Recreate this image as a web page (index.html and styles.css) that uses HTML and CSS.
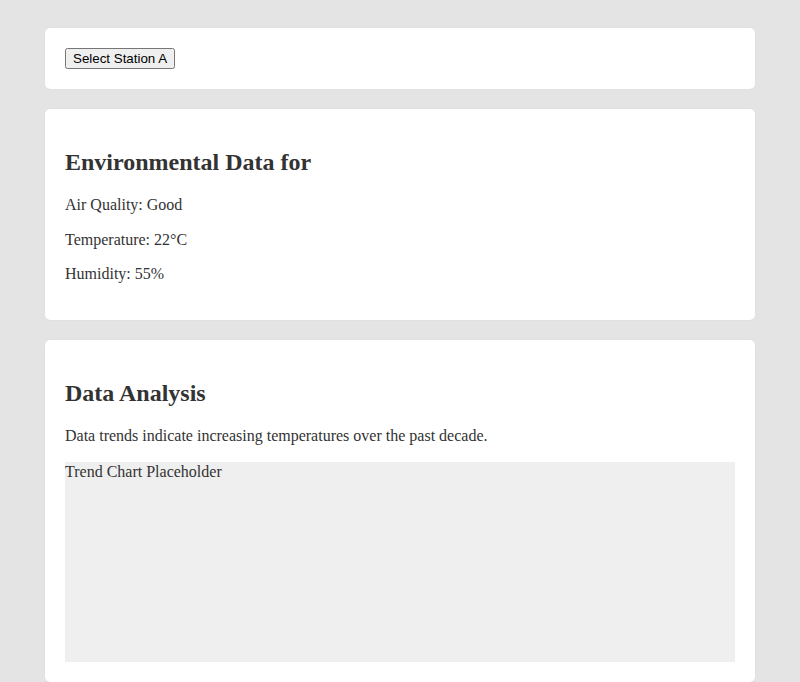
FILE: index.html
```html
<!DOCTYPE html>
<html lang="en">
<head>
<meta charset="utf-8">
<title>Environmental Data</title>
<link rel="stylesheet" href="styles.css">
</head>
<body>
<main class="page">
  <section class="card">
    <button class="station-btn">Select Station A</button>
  </section>
  <section class="card">
    <h2 class="card-title">Environmental Data for</h2>
    <p class="text">Air Quality: Good</p>
    <p class="text">Temperature: 22°C</p>
    <p class="text">Humidity: 55%</p>
  </section>
  <section class="card">
    <h2 class="card-title">Data Analysis</h2>
    <p class="text">Data trends indicate increasing temperatures over the past decade.</p>
    <div class="chart">Trend Chart Placeholder</div>
  </section>
</main>
</body>
</html>
```
FILE: styles.css
```css
html, body {
  margin: 0;
  padding: 0;
}
body {
  background: #e4e4e4;
  color: #333333;
  font-family: "Liberation Serif", "Times New Roman", serif;
  font-size: 16px;
}
.page {
  display: flex;
  flex-direction: column;
  gap: 20px;
  padding: 28px 45px;
}
.card {
  background: #ffffff;
  border-radius: 5px;
  padding: 20px;
  box-shadow: 0 0 1px rgba(0,0,0,0.12);
}
.station-btn {
  align-self: flex-start;
}
.card-title {
  font-size: 24px;
  line-height: 27.6px;
  font-weight: bold;
  margin: 19.92px 0;
}
.text {
  line-height: 18.5px;
  margin: 16px 0;
}
.chart {
  background: #efefef;
  height: 200px;
  line-height: 19px;
}
```
